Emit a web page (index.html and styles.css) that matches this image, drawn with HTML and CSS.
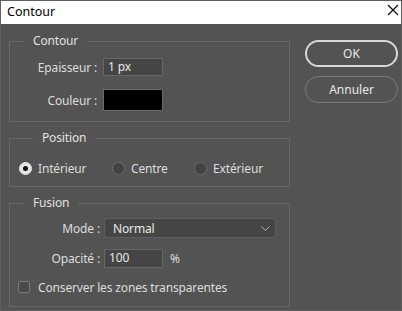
FILE: index.html
```html
<!DOCTYPE html>
<html lang="fr">
<head>
  <meta charset="UTF-8">
  <title>Contour</title>
  <link rel="stylesheet" href="styles.css">
</head>
<body>
  <div class="window">
    <div class="titlebar">
      <span class="title">Contour</span>
      <svg class="close" width="12" height="12" viewBox="0 0 12 12">
        <path d="M1 1 L11 11 M11 1 L1 11" stroke="#000" stroke-width="1.1" fill="none"/>
      </svg>
    </div>

    <div class="content">
      <div class="groups">
        <fieldset class="group contour">
          <legend>Contour</legend>
          <div class="row first">
            <span class="lbl">Epaisseur :</span>
            <div class="field small">1 px</div>
          </div>
          <div class="row second">
            <span class="lbl">Couleur :</span>
            <div class="swatch"></div>
          </div>
        </fieldset>

        <fieldset class="group position">
          <legend>Position</legend>
          <div class="radios">
            <div class="radio-item w1"><span class="radio on"></span>Intérieur</div>
            <div class="radio-item w2"><span class="radio"></span>Centre</div>
            <div class="radio-item"><span class="radio"></span>Extérieur</div>
          </div>
        </fieldset>

        <fieldset class="group fusion">
          <legend>Fusion</legend>
          <div class="row mode">
            <span class="lbl">Mode :</span>
            <div class="select">
              <span>Normal</span>
              <svg width="9" height="5" viewBox="0 0 9 5"><path d="M0.5 0.5 L4.5 4.5 L8.5 0.5" stroke="#b4b4b4" fill="none"/></svg>
            </div>
          </div>
          <div class="row opacity">
            <span class="lbl">Opacité :</span>
            <div class="field small">100</div>
            <span class="unit">%</span>
          </div>
          <div class="check-row">
            <span class="check"></span>Conserver les zones transparentes
          </div>
        </fieldset>
      </div>

      <div class="actions">
        <button class="btn primary">OK</button>
        <button class="btn">Annuler</button>
      </div>
    </div>
  </div>
</body>
</html>
```

FILE: styles.css
```css
body {
  margin: 0;
  font-family: 'Noto Sans', sans-serif;
  font-size: 12px;
  letter-spacing: -0.15px;
  color: #dcdcdc;
}
.window {
  width: 402px;
  height: 311px;
  box-sizing: border-box;
  border: 1px solid #5f5f5f;
  background: #535353;
}
.titlebar {
  height: 23px;
  background: #fff;
  display: flex;
  justify-content: space-between;
  align-items: flex-start;
}
.title {
  color: #000;
  margin-left: 6px;
  margin-top: 2px;
  font-size: 12.5px;
  letter-spacing: 0;
}
.close {
  margin-top: 3px;
  margin-right: 2px;
}
.content {
  display: flex;
  padding: 10px 0 0 8px;
}
.groups {
  width: 281px;
}
.group {
  margin: 0;
  padding: 0;
  border: 1px solid #686868;
}
.group + .group {
  margin-top: 9px;
}
.group legend {
  margin-left: 14px;
  padding: 0 9px;
  line-height: 14px;
  color: #e0e0e0;
}
.row {
  display: flex;
  align-items: center;
}
.lbl {
  text-align: right;
  margin-right: 6px;
}
.contour .lbl {
  width: 87px;
}
.contour {
  padding-bottom: 10px;
}
.contour .first {
  margin-top: 10px;
}
.contour .second {
  margin-top: 13px;
}
.field {
  box-sizing: border-box;
  height: 18px;
  background: #454545;
  border: 1px solid #666;
  padding-left: 4px;
  line-height: 16px;
  color: #e8e8e8;
}
.small {
  width: 60px;
}
.swatch {
  width: 60px;
  height: 22px;
  box-sizing: border-box;
  background: #000;
  border: 1px solid #6a6a6a;
}
.position {
  padding: 15px 0 10px 9px;
}
.radios {
  display: flex;
  height: 16px;
  align-items: center;
}
.radio-item {
  display: flex;
  align-items: center;
}
.w1 {
  width: 93px;
}
.w2 {
  width: 82px;
}
.radio {
  width: 13px;
  height: 13px;
  box-sizing: border-box;
  border-radius: 50%;
  background: #434343;
  border: 1px solid #6a6a6a;
  margin-right: 6px;
}
.radio.on {
  background: #e4e4e4;
  border-color: #e4e4e4;
  display: flex;
  align-items: center;
  justify-content: center;
}
.radio.on::after {
  content: "";
  width: 5px;
  height: 5px;
  border-radius: 50%;
  background: #111;
}
.fusion {
  padding-bottom: 11px;
}
.fusion .lbl {
  width: 90px;
  margin-right: 4px;
}
.mode {
  margin-top: 8px;
}
.select {
  box-sizing: border-box;
  width: 172px;
  height: 20px;
  background: #454545;
  border: 1px solid #5f5f5f;
  border-radius: 3px;
  display: flex;
  align-items: center;
  justify-content: space-between;
  padding: 0 5px 0 8px;
  color: #e8e8e8;
}
.opacity {
  margin-top: 11px;
}
.opacity .field {
  width: 59px;
  height: 19px;
}
.unit {
  margin-left: 7px;
}
.check-row {
  display: flex;
  align-items: center;
  height: 16px;
  margin-top: 11px;
  padding-left: 8px;
}
.check {
  width: 12px;
  height: 12px;
  box-sizing: border-box;
  border: 1px solid #7a7a7a;
  border-radius: 2px;
  background: #4a4a4a;
  margin-right: 8px;
}
.actions {
  margin-left: 15px;
  padding-top: 6px;
  display: flex;
  flex-direction: column;
  gap: 9px;
}
.btn {
  width: 93px;
  height: 27px;
  border-radius: 14px;
  background: transparent;
  border: 1px solid #7b7b7b;
  color: #e8e8e8;
  font-family: inherit;
  font-size: 12px;
  padding: 0;
}
.btn.primary {
  border: 2px solid #d8d8d8;
}
```
